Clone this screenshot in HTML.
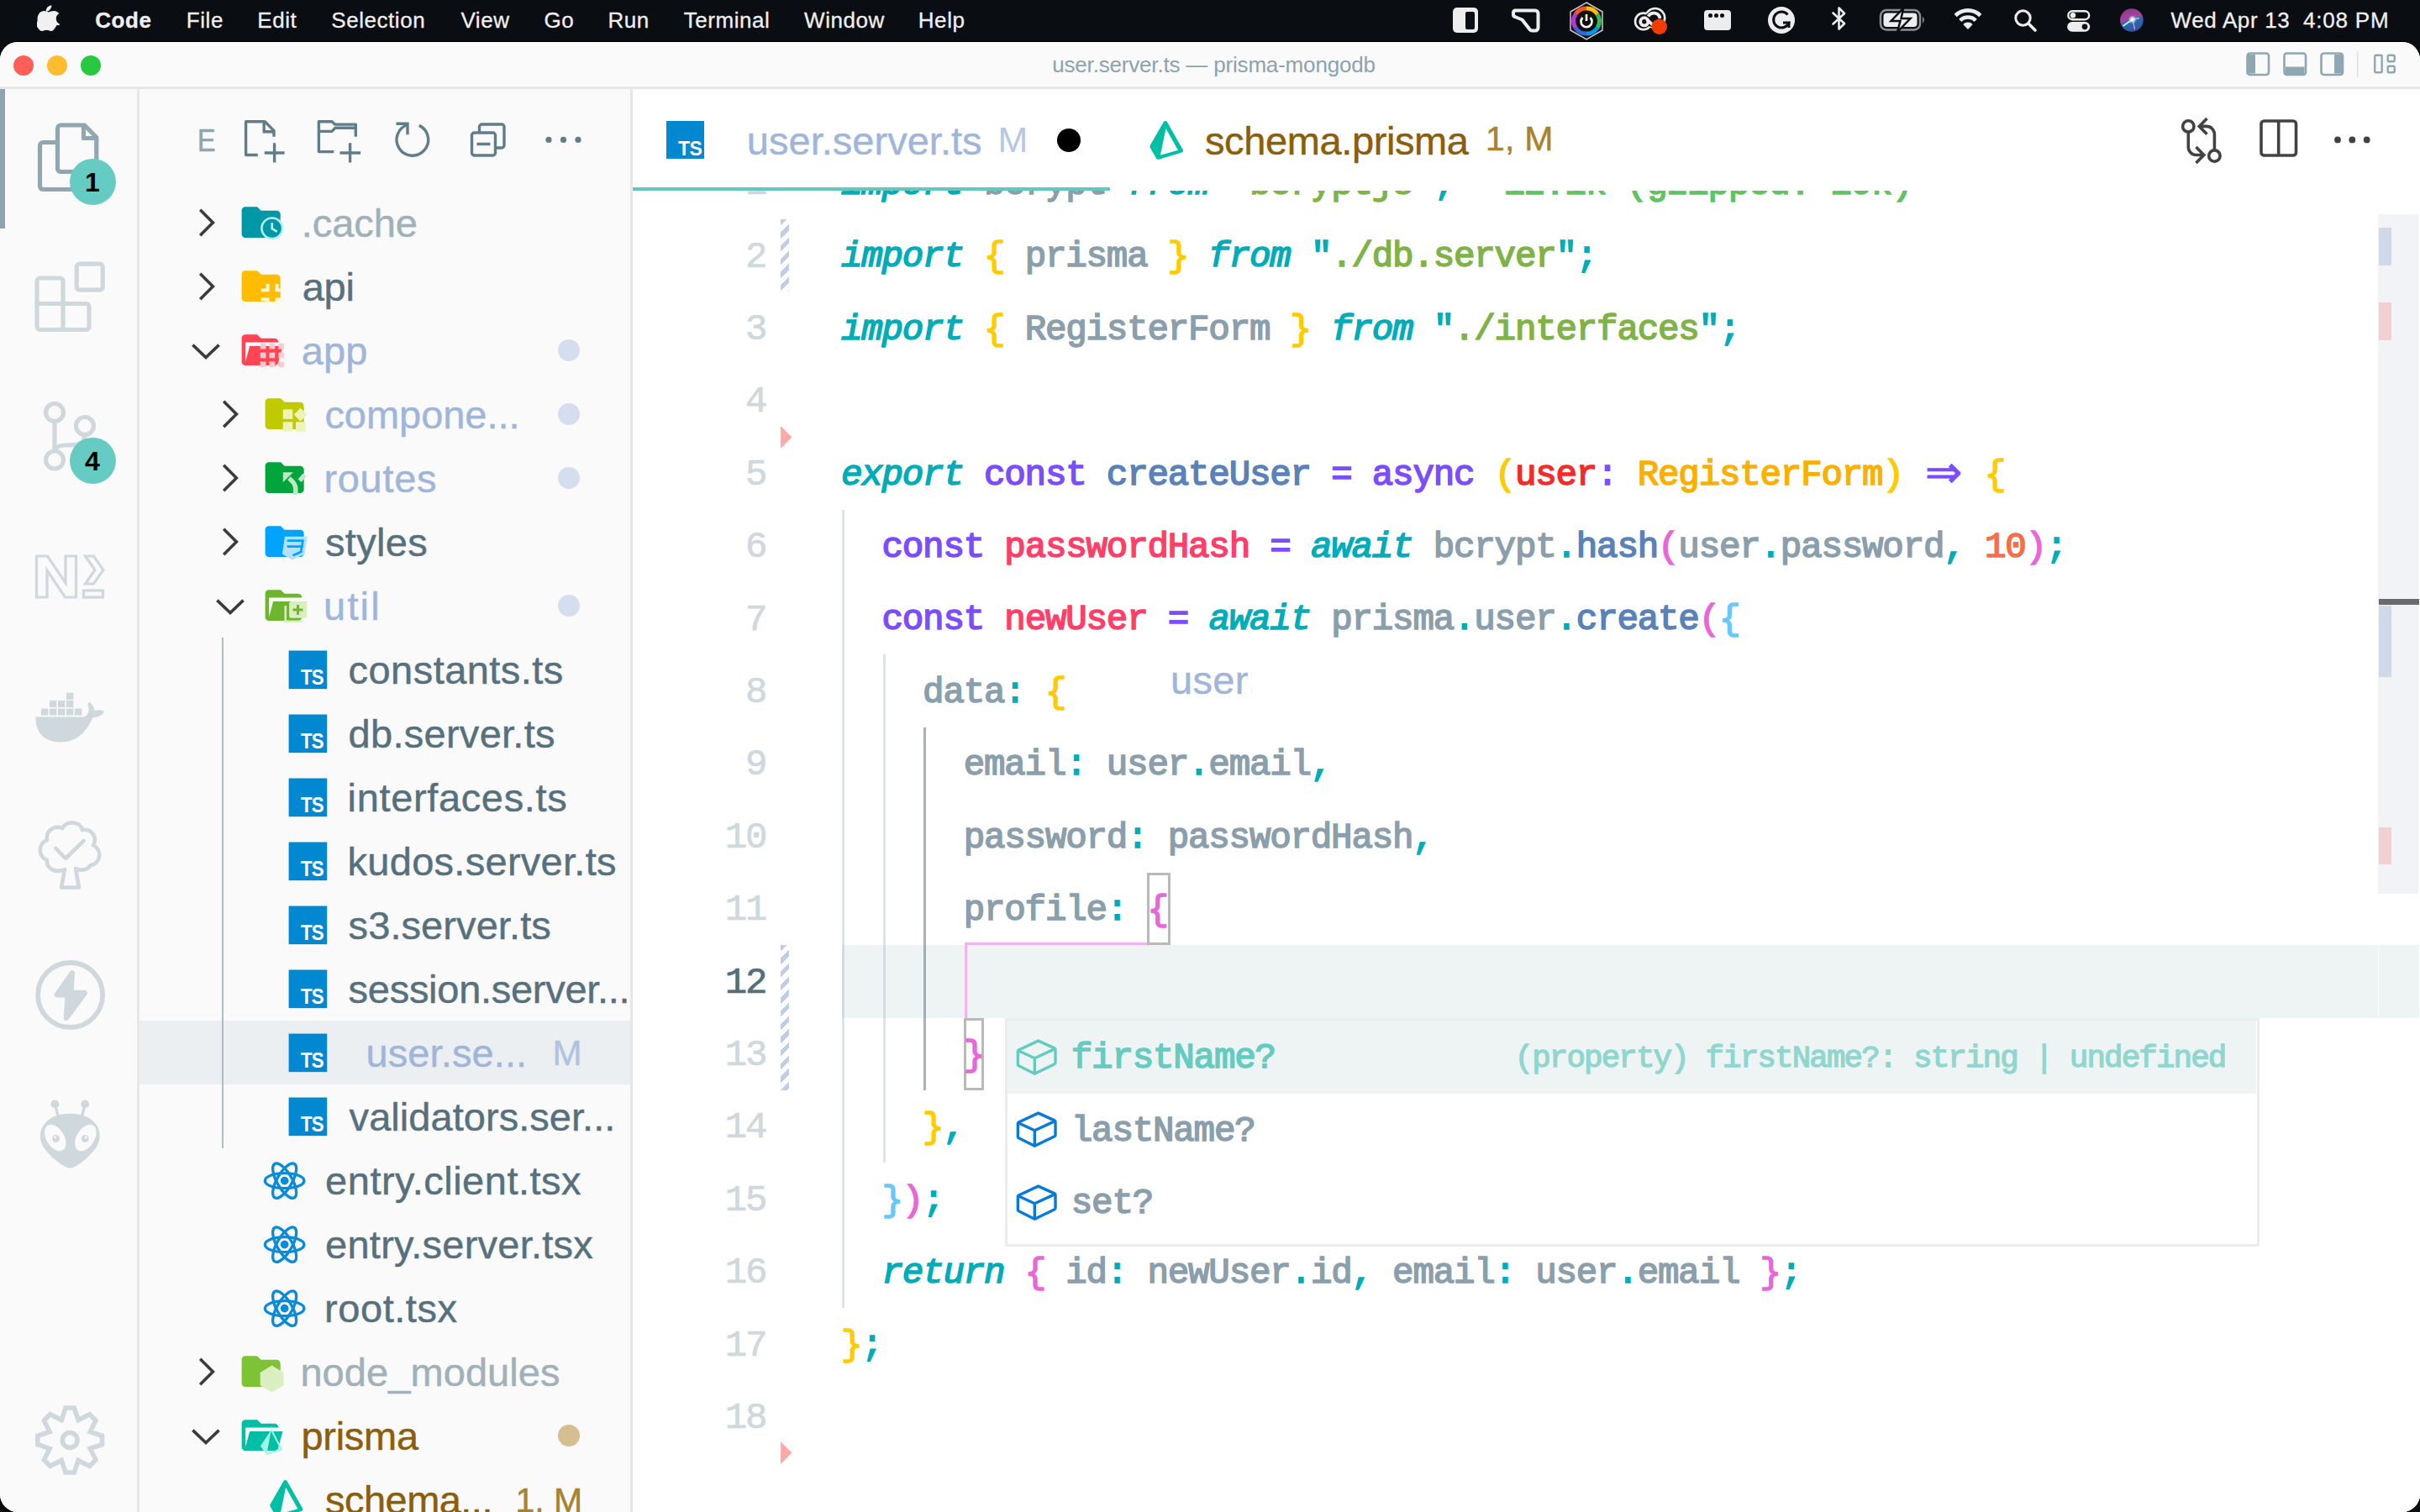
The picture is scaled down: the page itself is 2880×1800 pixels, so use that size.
<!DOCTYPE html>
<html lang="en"><head><meta charset="utf-8"><title>user.server.ts — prisma-mongodb</title>
<style>
*{box-sizing:border-box;margin:0;padding:0}
html,body{width:2880px;height:1800px;overflow:hidden;background:#0a0d12}
body{font-family:"Liberation Sans",sans-serif;position:relative}
.abs{position:absolute}
#menubar{position:absolute;left:0;top:0;width:2880px;height:50px;background:#0a0d12;color:#efefef;font-size:26px;line-height:50px;letter-spacing:0.55px;-webkit-text-stroke:0.3px #efefef}
#menubar span.mi{position:absolute;top:-1.5px;white-space:nowrap}
#window{position:absolute;left:0;top:50px;width:2880px;height:1750px;border-radius:21px;background:#fff;overflow:hidden;box-shadow:0 0 0 1.2px #000}
#titlebar{position:absolute;left:0;top:0;width:2880px;height:56px;background:#fafafa;border-bottom:3px solid #e7e7e7}
#title{position:absolute;left:0;width:2880px;top:-1px;text-align:center;font-size:26px;line-height:56px;color:#8ba3ad;letter-spacing:-0.18px;padding-left:9px}
.tl{position:absolute;top:16px;width:24px;height:24px;border-radius:50%}
#activity{position:absolute;left:0;top:56px;width:166px;height:1694px;background:#fafafa;border-right:3px solid #e7e7e7}
#sidebar{position:absolute;left:166px;top:56px;width:587px;height:1694px;background:#fafafa;border-right:3px solid #e7e7e7;overflow:hidden}
#editor{position:absolute;left:753px;top:56px;width:2127px;height:1694px;background:#fff;overflow:hidden}
.row{position:absolute;left:0;width:584px;height:76px;line-height:76px;font-size:47px;white-space:nowrap}
.row .lbl{position:absolute;top:1.5px;-webkit-text-stroke:0.45px currentColor}
.row svg{position:absolute}
.dot{position:absolute;width:26px;height:26px;border-radius:50%;left:498.4px;top:25px}
.c-def{color:#56717d}.c-ign{color:#a0b1b9}.c-mod{color:#9fb6da}.c-warn{color:#8c5e0a}
.code{position:absolute;left:0;white-space:pre;font-family:"Liberation Mono",monospace;font-size:42.5px;letter-spacing:-1.204px;line-height:86.4px;height:86.4px;-webkit-text-stroke:1.6px currentColor;color:#8a9fab}
.ln{position:absolute;white-space:pre;font-family:"Liberation Mono",monospace;font-size:44px;letter-spacing:-2.104px;line-height:86.4px;height:86.4px;width:160px;text-align:right;color:#cfd8dc;-webkit-text-stroke:0.7px currentColor}
.k{color:#00acb7;font-style:italic}
.p{color:#00acb7}
.v{color:#7c4dff}
.f{color:#5a82b8}
.r{color:#ff3f69}
.pr{color:#f52a2a}
.t{color:#fbb000}
.s{color:#7fb347}
.n{color:#f76d47}
.b1{color:#ffcb00}.b2{color:#e866d8}.b3{color:#68c8fa}
.g{color:#5fc45f}

.row svg{position:absolute}
.arrow{position:absolute;left:1290.100px;top:12.900px;width:45px;height:53px;line-height:53px;font-family:"DejaVu Sans",sans-serif;letter-spacing:0;font-size:53px;font-style:normal;-webkit-text-stroke:0.900px currentColor}
</style></head>
<body>
<div id="menubar">
<svg class="abs" style="left:44px;top:6px" width="26.500" height="31.500" viewBox="0 0 170 200"><path fill="#f0f0f0" d="M150.4 153.3c-3 7-6.600 13.400-10.800 19.300-5.700 8.100-10.400 13.700-14 16.800-5.600 5.100-11.600 7.800-18 7.900-4.600 0-10.200-1.300-16.600-4-6.500-2.600-12.400-3.900-17.900-3.900-5.700 0-11.800 1.300-18.400 3.900-6.500 2.700-11.800 4-15.900 4.200-6.200.3-12.300-2.500-18.500-8.100-3.900-3.400-8.800-9.200-14.600-17.500-6.300-8.800-11.400-19-15.500-30.700C5.900 128.600 3.800 116.400 3.800 104.600c0-13.500 2.900-25.200 8.800-35 4.600-7.900 10.700-14.100 18.400-18.600 7.700-4.600 16-6.900 24.900-7 4.900 0 11.300 1.500 19.300 4.500 7.900 3 13 4.500 15.300 4.500 1.700 0 7.300-1.800 16.900-5.300 9.100-3.300 16.700-4.600 23-4.100 17 1.400 29.800 8.100 38.300 20.200-15.200 9.200-22.700 22.100-22.600 38.700.1 12.900 4.800 23.600 14 32.100 4.200 4 8.800 7 14 9.200-1.100 3.300-2.300 6.400-3.600 9.400zM111.500 4c0 10.100-3.700 19.600-11.100 28.300-8.900 10.400-19.600 16.400-31.300 15.400-.1-1.200-.2-2.500-.2-3.800 0-9.700 4.200-20.100 11.700-28.600 3.700-4.300 8.500-7.900 14.300-10.700C100.600 1.900 106 .4 111 .1c.3 1.300.5 2.600.5 3.900z"/></svg>
<span class="mi" style="left:113.3px;font-weight:bold;">Code</span><span class="mi" style="left:221.8px;">File</span><span class="mi" style="left:306.3px;">Edit</span><span class="mi" style="left:394.3px;">Selection</span><span class="mi" style="left:548.4px;">View</span><span class="mi" style="left:647.4px;">Go</span><span class="mi" style="left:723.5px;">Run</span><span class="mi" style="left:813.6999999999999px;">Terminal</span><span class="mi" style="left:957.0999999999999px;">Window</span><span class="mi" style="left:1092.8px;">Help</span>
<div class="abs" style="left:1729px;top:9px;width:30px;height:30px;border-radius:5px;background:#ededed"></div><div class="abs" style="left:1744px;top:13.5px;width:11px;height:21px;border-radius:2px;background:#0a0d12"></div>
<svg class="abs" style="left:1798px;top:8px" width="36" height="34" viewBox="0 0 36 34"><path d="M5 4.500 H29 a3.500 3.500 0 0 1 3.500 3.500 V25 a3.500 3.500 0 0 1 -3.500 3.500 H25.500 a4 4 0 0 1 -3 -1.400 L13.500 15.500 L5 12 a3 3 0 0 1 -2 -3 V7.500 a3 3 0 0 1 2 -3z" fill="none" stroke="#ededed" stroke-width="4" stroke-linejoin="round"/></svg>
<svg class="abs" style="left:1864px;top:0px" width="48" height="50" viewBox="-24 -25 48 50"><polygon points="0,-22 19,-11 19,11 0,22 -19,11 -19,-11" fill="#111" stroke="#c8c8c8" stroke-width="1.500"/>
<g stroke-width="5" fill="none"><path d="M-13,-8 A15,15 0 0 1 0,-15" stroke="#e53"/><path d="M0,-15 A15,15 0 0 1 13,-8" stroke="#fb0"/><path d="M13,-8 A15,15 0 0 1 13,8" stroke="#3b5"/><path d="M13,8 A15,15 0 0 1 0,15" stroke="#09e"/><path d="M0,15 A15,15 0 0 1 -13,8" stroke="#36d"/><path d="M-13,8 A15,15 0 0 1 -13,-8" stroke="#b3d"/></g>
<circle r="8.500" fill="#111"/><path d="M-4.500,-4 A6.500,6.500 0 1 0 4.500,-4" fill="none" stroke="#fff" stroke-width="2.600"/><path d="M0,-8 V0" stroke="#fff" stroke-width="2.600"/></svg>
<svg class="abs" style="left:1940px;top:2px" width="50" height="46" viewBox="0 0 50 46"><g fill="#0a0d12" stroke="#ededed" stroke-width="2.600"><circle cx="29.700" cy="19.500" r="11.500"/><circle cx="15.800" cy="23.400" r="9.800"/></g><circle cx="26" cy="21" r="9" fill="#0a0d12"/><g fill="none" stroke="#ededed" stroke-width="3.800"><circle cx="16.800" cy="23.800" r="4.600"/><path d="M21.500 17.500 A7.500 7.500 0 0 1 35.500 20"/><path d="M19.800 20.800 L32 32.500"/></g><circle cx="34.700" cy="29.700" r="9.300" fill="#f03c00"/></svg>
<div class="abs" style="left:2028px;top:12px;width:32px;height:24px;border-radius:4px;background:#ededed"></div><div class="abs" style="left:2033px;top:15.500px;width:5px;height:5px;border-radius:50%;background:#0a0d12"></div><div class="abs" style="left:2040px;top:15.500px;width:5px;height:5px;border-radius:50%;background:#0a0d12"></div><div class="abs" style="left:2047px;top:15.500px;width:5px;height:5px;border-radius:50%;background:#0a0d12"></div>
<svg class="abs" style="left:2103px;top:7px" width="34" height="34" viewBox="-17 -17 34 34"><circle r="16" fill="#ededed"/><path d="M7.500,-6.500 A9.500,9.500 0 1 0 9,3 H2" fill="none" stroke="#0a0d12" stroke-width="3"/><path d="M9,3 V9" stroke="#0a0d12" stroke-width="3"/></svg>
<svg class="abs" style="left:2178px;top:7px" width="22" height="30" viewBox="0 0 22 30"><path d="M3.500 8.500 L17 21 L10.500 27.500 V2.500 L17 9 L3.500 21.500" fill="none" stroke="#ededed" stroke-width="2.600" stroke-linejoin="round" stroke-linecap="round"/></svg>
<svg class="abs" style="left:2236px;top:9px" width="58" height="30" viewBox="0 0 58 30"><rect x="2" y="3" width="47" height="23.500" rx="7" fill="none" stroke="#8d8f92" stroke-width="2.500"/><rect x="5.500" y="6.500" width="40" height="16.500" rx="4" fill="#ededed"/><path d="M52 10.500 q3.500 4 0 8.500z" fill="#8d8f92"/><path d="M29 1 L14.500 16 H25.500 L22 29 L37.500 13 H26.500z" fill="#ededed" stroke="#0a0d12" stroke-width="2.500"/></svg>
<svg class="abs" style="left:2324px;top:8px" width="36" height="28" viewBox="0 0 36 28"><g fill="none" stroke="#ededed" stroke-linecap="butt"><path d="M3.200 10.500 A21 21 0 0 1 32.800 10.500" stroke-width="4.600"/><path d="M8.800 16.300 A13 13 0 0 1 27.200 16.300" stroke-width="4.600"/></g><path d="M18 27 L12.300 21 A8 8 0 0 1 23.700 21z" fill="#ededed"/></svg>
<svg class="abs" style="left:2396px;top:10px" width="30" height="30" viewBox="0 0 30 30"><circle cx="11.500" cy="11.500" r="8.700" fill="none" stroke="#ededed" stroke-width="3"/><path d="M18 18 L26 26" stroke="#ededed" stroke-width="3.600" stroke-linecap="round"/></svg>
<svg class="abs" style="left:2459px;top:11.200px" width="30" height="28.100" viewBox="0 0 32 30"><rect x="2.500" y="2.500" width="26.500" height="10.500" rx="5.250" fill="none" stroke="#ededed" stroke-width="2.600"/><circle cx="8.500" cy="7.750" r="3.400" fill="#ededed"/><rect x="1.200" y="16" width="29" height="12.500" rx="6.250" fill="#ededed"/><circle cx="23.500" cy="22.250" r="3.600" fill="#0a0d12"/></svg>
<svg class="abs" style="left:2521px;top:9px" width="30" height="30" viewBox="-15 -15 30 30"><defs><linearGradient id="sg" x1="0.300" y1="0" x2="0.600" y2="1"><stop offset="0" stop-color="#8f3592"/><stop offset="0.420" stop-color="#a5449a"/><stop offset="0.550" stop-color="#3468ae"/><stop offset="1" stop-color="#2558a0"/></linearGradient><radialGradient id="sw" cx="0.500" cy="0.500" r="0.500"><stop offset="0" stop-color="#fff"/><stop offset="0.350" stop-color="#e8fbff" stop-opacity="0.900"/><stop offset="1" stop-color="#7fe8f0" stop-opacity="0"/></radialGradient></defs><circle cx="0.900" cy="0" r="13.800" fill="url(#sg)"/><path d="M-9.500,7 L2,-1" stroke="#bff6fb" stroke-width="1.600"/><path d="M2,-1 L10,-2.500" stroke="#59e0d8" stroke-width="1.600"/><path d="M2,-1 L4.500,11" stroke="#f08fd0" stroke-width="1.300"/><circle cx="1.800" cy="-0.800" r="5.200" fill="url(#sw)"/></svg>
<span class="mi" style="left:2583.500px;letter-spacing:0.650px">Wed Apr 13</span><span class="mi" style="left:2741px;letter-spacing:0.800px">4:08 PM</span>
</div>
<div id="window">
<div id="titlebar">
<div class="tl" style="left:16px;background:#ff5f57"></div><div class="tl" style="left:56px;background:#febc2e"></div><div class="tl" style="left:96px;background:#28c840"></div>
<div id="title">user.server.ts — prisma-mongodb</div>
<svg class="abs" style="left:2671px;top:10px" width="186" height="34" viewBox="2671 60 186 34"><rect x="2674.500" y="63.500" width="25.500" height="25.500" rx="3" fill="none" stroke="#8fa7b3" stroke-width="2.600"/><path d="M2674.500 65 h9.500 v22.500 h-9.500z" fill="#8fa7b3"/><rect x="2718.500" y="63.500" width="25.500" height="25.500" rx="3" fill="none" stroke="#8fa7b3" stroke-width="2.600"/><path d="M2720 79.500 h22.500 v8.500 h-22.500z" fill="#8fa7b3"/><rect x="2762.500" y="63.500" width="25.500" height="25.500" rx="3" fill="none" stroke="#8fa7b3" stroke-width="2.600"/><path d="M2778 65 h9.500 v22.500 h-9.500z" fill="#8fa7b3"/><path d="M2805.700 61 V92" stroke="#e2e2e2" stroke-width="1.600"/><rect x="2826.200" y="65.800" width="8.500" height="20.500" rx="1.500" fill="none" stroke="#8fa7b3" stroke-width="2.400"/><rect x="2841.700" y="65.800" width="8" height="7.500" rx="1.500" fill="none" stroke="#8fa7b3" stroke-width="2.400"/><rect x="2841.700" y="78.800" width="8" height="7.500" rx="1.500" fill="none" stroke="#8fa7b3" stroke-width="2.400"/></svg>
</div>
<div id="activity">
<div class="abs" style="left:0;top:0;width:5.500px;height:166px;background:#8da4ae"></div>
<svg class="abs" style="left:0;top:0" width="163" height="1694" viewBox="0 106 163 1694">
<g fill="none" stroke="#90a6b0" stroke-width="5.200" stroke-linejoin="round"><path d="M66 169.500 H51.500 a4 4 0 0 0 -4 4 V221.500 a4 4 0 0 0 4 4 H86"/><path d="M72.500 149 H100.500 L114.800 163.500 V200.500 a4 4 0 0 1 -4 4 H72.500 a4 4 0 0 1 -4 -4 V153 a4 4 0 0 1 4 -4z"/><path d="M99.500 149.500 V164.500 H114.500"/></g>
<g fill="none" stroke="#cfd8dc" stroke-width="5.200" stroke-linejoin="round"><path d="M47.500 331 H71.500 a3.500 3.500 0 0 1 3.500 3.500 V361.500 H102.500 a3.500 3.500 0 0 1 3.500 3.500 V389 a3.500 3.500 0 0 1 -3.500 3.500 H47.500 a3.500 3.500 0 0 1 -3.500 -3.500 V334.500 a3.500 3.500 0 0 1 3.500 -3.500z"/><path d="M44 361.500 H75 V392.500"/><rect x="91.200" y="314.200" width="31" height="31" rx="3.500"/></g>
<g fill="none" stroke="#cfd8dc" stroke-width="5.200"><circle cx="65" cy="491" r="10.500"/><circle cx="101" cy="507" r="10.500"/><circle cx="65" cy="547.500" r="10.500"/><path d="M65 501.500 V537"/><path d="M101 517.500 C101 530 90 530 78 530 C70 530 65 533 65 538"/></g>
<g fill="none" stroke="#cfd8dc" stroke-width="3.200" stroke-linejoin="miter"><path d="M43.500 711 V662 H56.500 L78 694 V662 H90.500 V711 H77.500 L56 679 V711z"/><path d="M101.500 662 H111.500 L123 678.500 L111.500 695 H101.500 L113 678.500z"/><rect x="99.500" y="703" width="23" height="8"/></g>
<g fill="#cfd8dc"><path d="M42.500 853.500 H100 C104 852 106 848 105.500 843 C104.500 840 104 838 106 836 C110 838 112 842 112.500 846 C117 844.500 121 845 124 847 C122 851.500 117 854 110.500 854 C104 870 92 883.500 72 883.500 C52 883.500 42 871 42.500 853.500z"/><rect x="49" y="843.5" width="8.400" height="8" /><rect x="59" y="843.5" width="8.400" height="8" /><rect x="69" y="843.5" width="8.400" height="8" /><rect x="79" y="843.5" width="8.400" height="8" /><rect x="89" y="843.5" width="8.400" height="8" /><rect x="59" y="834" width="8.400" height="8" /><rect x="69" y="834" width="8.400" height="8" /><rect x="79" y="834" width="8.400" height="8" /><rect x="79" y="824.8" width="8.400" height="8" /></g>
<g fill="none" stroke="#cfd8dc" stroke-width="4.600" stroke-linejoin="round" stroke-linecap="round"><path d="M77 1035 C66 1040 55 1034 56 1024 C45 1020 45 1004 56 1000 C54 988 66 982 74 986 C80 976 96 978 98 988 C110 986 116 998 111 1006 C122 1012 120 1028 108 1030 C104 1036 96 1037 90 1034 L94 1056.500 H73 L77 1035z"/><path d="M66.500 1010 L78 1022 L99.500 1001"/></g>
<circle cx="83.600" cy="1184.500" r="38.500" fill="none" stroke="#cfd8dc" stroke-width="5.800"/><path d="M85.800 1158.500 L67.800 1184.300 H80.600 L78.900 1211.800 L100.800 1182 H84.300z" fill="#cfd8dc" stroke="#cfd8dc" stroke-width="6.400" stroke-linejoin="round"/>
<g fill="#cfd8dc"><path d="M83.400 1390.600 C78 1391 60 1378 52 1366 C46.500 1357 47 1347 51.500 1340 C58 1330 70 1325.800 83.400 1325.800 C97 1325.800 109 1330 115.300 1340 C119.800 1347 120 1357 114.500 1366 C106.500 1378 89 1391 83.400 1390.600z"/><circle cx="65.400" cy="1314.400" r="4.900"/><circle cx="101.200" cy="1314.400" r="4.900"/></g><path d="M65.400 1314.400 L69 1328.500 M101.200 1314.400 L97.600 1328.500" stroke="#cfd8dc" stroke-width="3.200"/><ellipse cx="65.800" cy="1354.500" rx="10.600" ry="17.300" fill="#fafafa" transform="rotate(-31 65.800 1354.500)"/><ellipse cx="101.900" cy="1354.500" rx="10.600" ry="17.300" fill="#fafafa" transform="rotate(31 101.900 1354.500)"/><circle cx="66.500" cy="1355.600" r="4.500" fill="#cfd8dc"/><circle cx="101.200" cy="1355.600" r="4.500" fill="#cfd8dc"/><circle cx="65.500" cy="1354" r="1.400" fill="#fafafa"/><circle cx="102.300" cy="1354" r="1.400" fill="#fafafa"/>
<path d="M78.0 1676.1 L88.4 1676.1 L93.1 1690.5 L106.7 1683.7 L114.0 1691.0 L107.2 1704.6 L121.6 1709.3 L121.6 1719.7 L107.2 1724.4 L114.0 1738.0 L106.7 1745.3 L93.1 1738.5 L88.4 1752.9 L78.0 1752.9 L73.3 1738.5 L59.7 1745.3 L52.4 1738.0 L59.2 1724.4 L44.8 1719.7 L44.8 1709.3 L59.2 1704.6 L52.4 1691.0 L59.7 1683.7 L73.3 1690.5z" fill="none" stroke="#cfd8dc" stroke-width="5.500" stroke-linejoin="miter" stroke-miterlimit="6"/><circle cx="83.2" cy="1714.5" r="8.900" fill="none" stroke="#cfd8dc" stroke-width="5.500"/>
</svg>
<div class="abs" style="left:82.5px;top:82.9px;width:55px;height:55px;border-radius:50%;background:#66ccc3;color:#000;font-weight:bold;font-size:32px;line-height:56px;text-align:center">1</div><div class="abs" style="left:82.5px;top:414.5px;width:55px;height:55px;border-radius:50%;background:#66ccc3;color:#000;font-weight:bold;font-size:32px;line-height:56px;text-align:center">4</div>
</div>
<div id="sidebar">
<div class="abs" style="left:68.500px;top:41px;font-size:37.500px;line-height:40px;color:#8fa3ad;transform:scaleX(0.86);transform-origin:0 0;-webkit-text-stroke:0.600px #8fa3ad">E</div>
<svg class="abs" style="left:0;top:0" width="584" height="121" viewBox="166 106 584 121"><g fill="none" stroke="#5f7d8b" stroke-width="3.400" stroke-linejoin="miter"><path d="M306.800 184.500 H292.600 V144.700 H315.200 L326 155.600 V162.700" stroke-linejoin="round"/><path d="M314.200 144.700 V156.800 H326"/><path d="M326.600 170.200 V193.600 M314.800 182 H338.600"/><path d="M397.300 180.600 H379.400 V144.700 H395 L398.500 148.100 H423.300 V162.700" stroke-linejoin="round"/><path d="M379.400 156.400 H395 L399 152.300 H423.300"/><path d="M416.600 170.200 V193.600 M404.500 182 H429.100"/><path d="M498.800 149.400 A18.800 18.800 0 1 1 485.200 148.500"/><path d="M471.500 147.300 H485 V160.200" /><rect x="561.500" y="158" width="28" height="27" rx="3"/><path d="M570.500 158 V151 a3 3 0 0 1 3 -3 H597 a3 3 0 0 1 3 3 V173 a3 3 0 0 1 -3 3 H590"/><path d="M567.500 171.500 H583.500"/></g><g fill="#5f7d8b"><circle cx="653" cy="166.400" r="3.600"/><circle cx="670.500" cy="166.400" r="3.600"/><circle cx="688" cy="166.400" r="3.600"/></g></svg>
<div class="row" style="top:120.5px;"><svg style="left:65.7px;top:18.0px" width="28" height="40" viewBox="-14 -20 28 40"><path d="M-7.800 -15.200 L7.400 0 L-7.800 15.200" fill="none" stroke="#3b3b3b" stroke-width="3.600"/></svg><svg style="left:116.6px;top:10.3px" width="55.3" height="55.3" viewBox="0 0 24 24" overflow="visible"><path d="M10 4H4c-1.110 0-2 .890-2 2v12c0 1.097.903 2 2 2h16c1.097 0 2-.903 2-2V8c0-1.110-.9-2-2-2h-8l-2-2z" fill="#0097a7"/><circle cx="17.700" cy="15.100" r="5.350" fill="#0097a7" stroke="#b2f0f5" stroke-width="1.150"/><path d="M17.700 12.300 V15.300 L20.300 16.900" fill="none" stroke="#b2f0f5" stroke-width="1.150"/></svg><span class="lbl c-ign" style="left:192.8px;letter-spacing:-0.08px">.cache</span></div>
<div class="row" style="top:196.5px;"><svg style="left:65.7px;top:18.0px" width="28" height="40" viewBox="-14 -20 28 40"><path d="M-7.800 -15.200 L7.400 0 L-7.800 15.200" fill="none" stroke="#3b3b3b" stroke-width="3.600"/></svg><svg style="left:116.6px;top:10.3px" width="55.3" height="55.3" viewBox="0 0 24 24" overflow="visible"><path d="M10 4H4c-1.110 0-2 .890-2 2v12c0 1.097.903 2 2 2h16c1.097 0 2-.903 2-2V8c0-1.110-.9-2-2-2h-8l-2-2z" fill="#ffbc00"/><g fill="#fff8dc"><path d="M12.070 13.200 H14.600 V10.900 H16.300 V14.900 H12.070z"/><path d="M23.570 13.200 H21.050 V10.900 H19.350 V14.900 H23.570z"/><path d="M12.070 19.600 H14.600 V22 H16.300 V18.050 H12.070z"/><path d="M23.570 19.600 H21.050 V22 H19.350 V18.050 H23.570z"/></g></svg><span class="lbl c-def" style="left:193.7px;letter-spacing:-0.25px">api</span></div>
<div class="row" style="top:272.5px;"><svg style="left:59.2px;top:25.5px" width="40" height="28" viewBox="-20 -14 40 28"><path d="M-15.600 -7.400 L0 7.600 L15.600 -7.400" fill="none" stroke="#3b3b3b" stroke-width="3.600"/></svg><svg style="left:116.6px;top:10.3px" width="55.3" height="55.3" viewBox="0 0 24 24" overflow="visible"><path d="M19 20H4c-1.110 0-2-.9-2-2V6c0-1.110.890-2 2-2h6l2 2h7a2 2 0 0 1 2 2H4v10l2.140-8h17.070l-2.280 8.500c-.230.870-1.010 1.500-1.930 1.500z" fill="#ff4453"/><rect x="11.6" y="8.6" width="2.900" height="2.900" fill="#ffc9d0"/><rect x="11.6" y="13.3" width="2.900" height="2.900" fill="#ffc9d0"/><rect x="11.6" y="18.0" width="2.900" height="2.900" fill="#ffc9d0"/><rect x="16.3" y="8.6" width="2.900" height="2.900" fill="#ffc9d0"/><rect x="16.3" y="13.3" width="2.900" height="2.900" fill="#ffc9d0"/><rect x="16.3" y="18.0" width="2.900" height="2.900" fill="#ffc9d0"/><rect x="21.0" y="8.6" width="2.900" height="2.900" fill="#ffc9d0"/><rect x="21.0" y="13.3" width="2.900" height="2.900" fill="#ffc9d0"/><rect x="21.0" y="18.0" width="2.900" height="2.900" fill="#ffc9d0"/></svg><span class="lbl c-mod" style="left:192.7px;letter-spacing:0.15px">app</span><div class="dot" style="background:#d5deee"></div></div>
<div class="row" style="top:348.5px;"><svg style="left:94.0px;top:18.0px" width="28" height="40" viewBox="-14 -20 28 40"><path d="M-7.800 -15.200 L7.400 0 L-7.800 15.200" fill="none" stroke="#3b3b3b" stroke-width="3.600"/></svg><svg style="left:144.9px;top:10.3px" width="55.3" height="55.3" viewBox="0 0 24 24" overflow="visible"><path d="M10 4H4c-1.110 0-2 .890-2 2v12c0 1.097.903 2 2 2h16c1.097 0 2-.903 2-2V8c0-1.110-.9-2-2-2h-8l-2-2z" fill="#c0ca00"/><g fill="#eef3b8"><rect x="11.200" y="9.700" width="5" height="5"/><rect x="11.200" y="16.200" width="5" height="5"/><rect x="17.800" y="16.200" width="5" height="5"/><path d="M20.200 9 L23.600 12.400 L20.200 15.800 L16.800 12.400z"/></g></svg><span class="lbl c-mod" style="left:220.4px;letter-spacing:-0.045px">compone...</span><div class="dot" style="background:#d5deee"></div></div>
<div class="row" style="top:424.5px;"><svg style="left:94.0px;top:18.0px" width="28" height="40" viewBox="-14 -20 28 40"><path d="M-7.800 -15.200 L7.400 0 L-7.800 15.200" fill="none" stroke="#3b3b3b" stroke-width="3.600"/></svg><svg style="left:144.9px;top:10.3px" width="55.3" height="55.3" viewBox="0 0 24 24" overflow="visible"><path d="M10 4H4c-1.110 0-2 .890-2 2v12c0 1.097.903 2 2 2h16c1.097 0 2-.903 2-2V8c0-1.110-.9-2-2-2h-8l-2-2z" fill="#00a53c"/><path d="M17.700 20.800 V17.600 C17.700 15.300 16.200 13.800 14.300 12.300" fill="none" stroke="#bfe8c6" stroke-width="2.400"/><path d="M11.200 9.250 H16.400 L11.200 14.450z" fill="#bfe8c6"/><path d="M19.800 13.550 L22.400 10.550" fill="none" stroke="#bfe8c6" stroke-width="2.300"/></svg><span class="lbl c-mod" style="left:219.4px;letter-spacing:0.72px">routes</span><div class="dot" style="background:#d5deee"></div></div>
<div class="row" style="top:500.5px;"><svg style="left:94.0px;top:18.0px" width="28" height="40" viewBox="-14 -20 28 40"><path d="M-7.800 -15.200 L7.400 0 L-7.800 15.200" fill="none" stroke="#3b3b3b" stroke-width="3.600"/></svg><svg style="left:144.9px;top:10.3px" width="55.3" height="55.3" viewBox="0 0 24 24" overflow="visible"><path d="M10 4H4c-1.110 0-2 .890-2 2v12c0 1.097.903 2 2 2h16c1.097 0 2-.903 2-2V8c0-1.110-.9-2-2-2h-8l-2-2z" fill="#00a3ff"/><path d="M12.150 9.400 H23.700 L22.400 18.450 L15.900 21.500 L10.800 18.450z" fill="#b5e0ff"/><path d="M13.300 11.600 H21.400 L21 14.600 H13.300 M20.900 14.600 L20.500 17.400 L16.300 19.200" stroke="#00a3ff" stroke-width="1.200" fill="none"/></svg><span class="lbl c-def" style="left:221.1px;letter-spacing:0.28px">styles</span></div>
<div class="row" style="top:576.5px;"><svg style="left:87.5px;top:25.5px" width="40" height="28" viewBox="-20 -14 40 28"><path d="M-15.600 -7.400 L0 7.600 L15.600 -7.400" fill="none" stroke="#3b3b3b" stroke-width="3.600"/></svg><svg style="left:144.9px;top:10.3px" width="55.3" height="55.3" viewBox="0 0 24 24" overflow="visible"><path d="M19 20H4c-1.110 0-2-.9-2-2V6c0-1.110.890-2 2-2h6l2 2h7a2 2 0 0 1 2 2H4v10l2.140-8h17.070l-2.280 8.500c-.230.870-1.010 1.500-1.930 1.500z" fill="#6cb52d"/><path d="M12.500 12.150 V20.300 H21.100" fill="none" stroke="#d9efc0" stroke-width="1.100"/><rect x="14.400" y="10" width="9.100" height="8.600" rx="1.100" fill="#d9efc0"/><path d="M18.900 11.700 v5.200 M16.300 14.300 h5.200" stroke="#6cb52d" stroke-width="1.300"/></svg><span class="lbl c-mod" style="left:219.1px;letter-spacing:2.166px">util</span><div class="dot" style="background:#d5deee"></div></div>
<div class="row" style="top:652.5px;"><svg style="left:173.2px;top:10.8px" width="55.3" height="55.3" viewBox="0 0 24 24"><rect x="2" y="2.400" width="19.800" height="19.800" fill="#0288d1"/><text x="20" y="20.100" text-anchor="end" font-family="Liberation Sans, sans-serif" font-weight="bold" font-size="10.900" fill="#fff" letter-spacing="-0.3" textLength="11.800" lengthAdjust="spacingAndGlyphs">TS</text></svg><span class="lbl c-def" style="left:248.6px;letter-spacing:0.445px">constants.ts</span></div>
<div class="row" style="top:728.5px;"><svg style="left:173.2px;top:10.8px" width="55.3" height="55.3" viewBox="0 0 24 24"><rect x="2" y="2.400" width="19.800" height="19.800" fill="#0288d1"/><text x="20" y="20.100" text-anchor="end" font-family="Liberation Sans, sans-serif" font-weight="bold" font-size="10.900" fill="#fff" letter-spacing="-0.3" textLength="11.800" lengthAdjust="spacingAndGlyphs">TS</text></svg><span class="lbl c-def" style="left:248.6px;letter-spacing:0.273px">db.server.ts</span></div>
<div class="row" style="top:804.5px;"><svg style="left:173.2px;top:10.8px" width="55.3" height="55.3" viewBox="0 0 24 24"><rect x="2" y="2.400" width="19.800" height="19.800" fill="#0288d1"/><text x="20" y="20.100" text-anchor="end" font-family="Liberation Sans, sans-serif" font-weight="bold" font-size="10.900" fill="#fff" letter-spacing="-0.3" textLength="11.800" lengthAdjust="spacingAndGlyphs">TS</text></svg><span class="lbl c-def" style="left:247.6px;letter-spacing:0.642px">interfaces.ts</span></div>
<div class="row" style="top:880.5px;"><svg style="left:173.2px;top:10.8px" width="55.3" height="55.3" viewBox="0 0 24 24"><rect x="2" y="2.400" width="19.800" height="19.800" fill="#0288d1"/><text x="20" y="20.100" text-anchor="end" font-family="Liberation Sans, sans-serif" font-weight="bold" font-size="10.900" fill="#fff" letter-spacing="-0.3" textLength="11.800" lengthAdjust="spacingAndGlyphs">TS</text></svg><span class="lbl c-def" style="left:247.6px;letter-spacing:0.271px">kudos.server.ts</span></div>
<div class="row" style="top:956.5px;"><svg style="left:173.2px;top:10.8px" width="55.3" height="55.3" viewBox="0 0 24 24"><rect x="2" y="2.400" width="19.800" height="19.800" fill="#0288d1"/><text x="20" y="20.100" text-anchor="end" font-family="Liberation Sans, sans-serif" font-weight="bold" font-size="10.900" fill="#fff" letter-spacing="-0.3" textLength="11.800" lengthAdjust="spacingAndGlyphs">TS</text></svg><span class="lbl c-def" style="left:248.6px;letter-spacing:0.081px">s3.server.ts</span></div>
<div class="row" style="top:1032.5px;"><svg style="left:173.2px;top:10.8px" width="55.3" height="55.3" viewBox="0 0 24 24"><rect x="2" y="2.400" width="19.800" height="19.800" fill="#0288d1"/><text x="20" y="20.100" text-anchor="end" font-family="Liberation Sans, sans-serif" font-weight="bold" font-size="10.900" fill="#fff" letter-spacing="-0.3" textLength="11.800" lengthAdjust="spacingAndGlyphs">TS</text></svg><span class="lbl c-def" style="left:248.6px;letter-spacing:-0.281px">session.server...</span></div>
<div class="row" style="top:1108.5px;background:#eceff1;"><svg style="left:173.2px;top:10.8px" width="55.3" height="55.3" viewBox="0 0 24 24"><rect x="2" y="2.400" width="19.800" height="19.800" fill="#0288d1"/><text x="20" y="20.100" text-anchor="end" font-family="Liberation Sans, sans-serif" font-weight="bold" font-size="10.900" fill="#fff" letter-spacing="-0.3" textLength="11.800" lengthAdjust="spacingAndGlyphs">TS</text></svg><span class="lbl c-mod" style="left:269.5px;letter-spacing:0.099px">user.se...</span><span class="lbl" style="left:491.500px;font-size:42px;color:#b0c3e2">M</span></div>
<div class="row" style="top:1184.5px;"><svg style="left:173.2px;top:10.8px" width="55.3" height="55.3" viewBox="0 0 24 24"><rect x="2" y="2.400" width="19.800" height="19.800" fill="#0288d1"/><text x="20" y="20.100" text-anchor="end" font-family="Liberation Sans, sans-serif" font-weight="bold" font-size="10.900" fill="#fff" letter-spacing="-0.3" textLength="11.800" lengthAdjust="spacingAndGlyphs">TS</text></svg><span class="lbl c-def" style="left:249.6px;letter-spacing:0.044px">validators.ser...</span></div>
<div class="row" style="top:1260.5px;"><svg style="left:144.9px;top:11.8px" width="55.3" height="55.3" viewBox="0 0 24 24"><ellipse cx="12" cy="12" rx="10.100" ry="3.900" fill="none" stroke="#0a8bd8" stroke-width="1.450"/><ellipse cx="12" cy="12" rx="10.100" ry="3.900" fill="none" stroke="#0a8bd8" stroke-width="1.450" transform="rotate(60 12 12)"/><ellipse cx="12" cy="12" rx="10.100" ry="3.900" fill="none" stroke="#0a8bd8" stroke-width="1.450" transform="rotate(120 12 12)"/><circle cx="12" cy="12" r="2.100" fill="#0a8bd8"/></svg><span class="lbl c-def" style="left:221.1px;letter-spacing:0.507px">entry.client.tsx</span></div>
<div class="row" style="top:1336.5px;"><svg style="left:144.9px;top:11.8px" width="55.3" height="55.3" viewBox="0 0 24 24"><ellipse cx="12" cy="12" rx="10.100" ry="3.900" fill="none" stroke="#0a8bd8" stroke-width="1.450"/><ellipse cx="12" cy="12" rx="10.100" ry="3.900" fill="none" stroke="#0a8bd8" stroke-width="1.450" transform="rotate(60 12 12)"/><ellipse cx="12" cy="12" rx="10.100" ry="3.900" fill="none" stroke="#0a8bd8" stroke-width="1.450" transform="rotate(120 12 12)"/><circle cx="12" cy="12" r="2.100" fill="#0a8bd8"/></svg><span class="lbl c-def" style="left:221.1px;letter-spacing:0.233px">entry.server.tsx</span></div>
<div class="row" style="top:1412.5px;"><svg style="left:144.9px;top:11.8px" width="55.3" height="55.3" viewBox="0 0 24 24"><ellipse cx="12" cy="12" rx="10.100" ry="3.900" fill="none" stroke="#0a8bd8" stroke-width="1.450"/><ellipse cx="12" cy="12" rx="10.100" ry="3.900" fill="none" stroke="#0a8bd8" stroke-width="1.450" transform="rotate(60 12 12)"/><ellipse cx="12" cy="12" rx="10.100" ry="3.900" fill="none" stroke="#0a8bd8" stroke-width="1.450" transform="rotate(120 12 12)"/><circle cx="12" cy="12" r="2.100" fill="#0a8bd8"/></svg><span class="lbl c-def" style="left:220.1px;letter-spacing:0.543px">root.tsx</span></div>
<div class="row" style="top:1488.5px;"><svg style="left:65.7px;top:18.0px" width="28" height="40" viewBox="-14 -20 28 40"><path d="M-7.800 -15.200 L7.400 0 L-7.800 15.200" fill="none" stroke="#3b3b3b" stroke-width="3.600"/></svg><svg style="left:116.6px;top:10.3px" width="55.3" height="55.3" viewBox="0 0 24 24" overflow="visible"><path d="M10 4H4c-1.110 0-2 .890-2 2v12c0 1.097.903 2 2 2h16c1.097 0 2-.903 2-2V8c0-1.110-.9-2-2-2h-8l-2-2z" fill="#7dc333"/><path d="M17.600 8.950 L23.650 12.550 V19.200 L17.600 22.800 L11.600 19.200 V12.550z" fill="#d9efc0"/></svg><span class="lbl c-ign" style="left:191.4px;letter-spacing:0.073px">node_modules</span></div>
<div class="row" style="top:1564.5px;"><svg style="left:59.2px;top:25.5px" width="40" height="28" viewBox="-20 -14 40 28"><path d="M-15.600 -7.400 L0 7.600 L15.600 -7.400" fill="none" stroke="#3b3b3b" stroke-width="3.600"/></svg><svg style="left:116.6px;top:10.3px" width="55.3" height="55.3" viewBox="0 0 24 24" overflow="visible"><path d="M19 20H4c-1.110 0-2-.9-2-2V6c0-1.110.890-2 2-2h6l2 2h7a2 2 0 0 1 2 2H4v10l2.140-8h17.070l-2.280 8.500c-.230.870-1.010 1.500-1.930 1.500z" fill="#00bfa5"/><path d="M17.300 9.100 L11.700 17.550 L14.700 21.800 L15.050 21.200z" fill="#9ff5e4"/><path d="M17.300 9.100 L22.550 19.350 L14.700 21.800" fill="none" stroke="#9ff5e4" stroke-width="0.900" stroke-linejoin="round"/></svg><span class="lbl c-warn" style="left:192.4px;letter-spacing:-0.26px">prisma</span><div class="dot" style="background:#d6bf8f"></div></div>
<div class="row" style="top:1640.5px;"><svg style="left:145.9px;top:10.5px" width="55.3" height="55.3" viewBox="0 0 24 24"><path d="M11.100 2.600 L4.200 14.600 a1.200 1.200 0 0 0 0 1.200 L7.300 21.200 a1.200 1.200 0 0 0 1.400 .5 L20.300 18.200 a1 1 0 0 0 .6 -1.400 L12.800 2.600 a1 1 0 0 0 -1.700 0z M12.200 6 L18.400 17 L9.400 19.600z" fill="#00bfa5" fill-rule="evenodd"/></svg><span class="lbl c-warn" style="left:221.1px;letter-spacing:-0.55px">schema...</span><span class="lbl" style="left:447.500px;font-size:41px;color:#a8832f;-webkit-text-stroke:0.500px #a8832f">1, M</span></div>
<div class="abs" style="left:97.69999999999999px;top:652.5px;width:2.600px;height:608px;background:#aebcc4"></div>
</div>
<div id="editor">
<div class="abs" style="left:0;top:0;width:2127px;height:121px;background:#fff">
<svg class="abs" style="left:40px;top:38px" width="45" height="45" viewBox="0 0 45 45"><rect width="45" height="45" fill="#0288d1"/><text x="42.500" y="40.500" text-anchor="end" font-family="Liberation Sans, sans-serif" font-weight="bold" font-size="23" fill="#fff" letter-spacing="-0.4">TS</text></svg>
<div class="abs" style="left:135.79999999999995px;top:0.700px;line-height:121px;font-size:47px;color:#9fb6da;white-space:nowrap;letter-spacing:0.020px;-webkit-text-stroke:0.450px #9fb6da">user.server.ts</div>
<div class="abs" style="left:434.5px;top:0px;line-height:121px;font-size:43px;color:#b6c7e2;white-space:nowrap">M</div>
<div class="abs" style="left:505.4000000000001px;top:46.5px;width:28px;height:28px;border-radius:50%;background:#000"></div>
<div class="abs" style="left:0;top:117.30000000000001px;width:568px;height:3.700px;background:#62c8be"></div>
<svg class="abs" style="left:605.5px;top:32.5px" width="56" height="56" viewBox="0 0 24 24"><path d="M11.100 2.600 L4.200 14.600 a1.200 1.200 0 0 0 0 1.200 L7.300 21.200 a1.200 1.200 0 0 0 1.400 .5 L20.300 18.200 a1 1 0 0 0 .6 -1.400 L12.800 2.600 a1 1 0 0 0 -1.700 0z M12.200 6 L18.400 17 L9.400 19.600z" fill="#00bfa5" fill-rule="evenodd"/></svg><div class="abs" style="left:681px;top:0.700px;line-height:121px;font-size:47px;color:#8c5e0a;white-space:nowrap;letter-spacing:-0.390px;-webkit-text-stroke:0.450px #8c5e0a">schema.prisma</div>
<div class="abs" style="left:1015px;top:-0.700px;line-height:121px;font-size:41px;color:#a8832f;white-space:nowrap;letter-spacing:0.200px;-webkit-text-stroke:0.500px #a8832f">1, M</div>
<svg class="abs" style="left:1837px;top:30px" width="240" height="64" viewBox="2590 136 240 64"><g fill="none" stroke="#424242" stroke-width="3.600"><circle cx="2604.300" cy="150.400" r="6.700"/><circle cx="2635.400" cy="185.600" r="6.700"/><path d="M2604.300 157.200 V175 a9.500 9.500 0 0 0 9.500 9.500 H2621.500"/><path d="M2613.500 175 L2622.800 184.500 L2613.500 194" stroke-linejoin="miter"/><path d="M2635.400 178.800 V159.900 a9.500 9.500 0 0 0 -9.500 -9.500 H2618.500"/><path d="M2626.500 141 L2617.300 150.400 L2626.500 159.800" stroke-linejoin="miter"/><rect x="2691" y="144" width="41.500" height="41" rx="3.500"/><path d="M2711.700 144 V185"/></g><g fill="#424242"><circle cx="2782" cy="166.400" r="3.900"/><circle cx="2799.300" cy="166.400" r="3.900"/><circle cx="2816.700" cy="166.400" r="3.900"/></g></svg>
</div>
<div class="abs" style="left:0;top:121px;width:2127px;height:1573px;overflow:hidden">
<div class="abs" style="left:249.1px;top:897.8px;width:1900px;height:86.900px;background:#eef3f4"></div>
<div class="abs" style="left:2077.0px;top:28.0px;width:48px;height:808.500px;background:rgba(200,208,220,0.250)"></div>
<div class="abs" style="left:2078.0px;top:44.0px;width:15px;height:45px;background:#d0d9ea"></div><div class="abs" style="left:2078.0px;top:133.0px;width:15px;height:44.5px;background:#f0d0d2"></div><div class="abs" style="left:2078.0px;top:494.0px;width:15px;height:85px;background:#d0d9ea"></div><div class="abs" style="left:2078.0px;top:757.5px;width:15px;height:44.5px;background:#f0d0d2"></div><div class="abs" style="left:2078.0px;top:486.0px;width:49px;height:7px;background:#6a6a6a"></div>
<div class="abs" style="left:2076.5px;top:897.8px;width:1.200px;height:86.900px;background:#fafcfc"></div><div class="abs" style="left:2125.5px;top:0;width:1.500px;height:1573px;background:#fff"></div>
<div class="abs" style="left:249.1px;top:379.6px;width:3.300px;height:950.4000000000001px;background:rgba(160,180,195,0.36)"></div><div class="abs" style="left:298.2px;top:552.4px;width:3.200px;height:604.8000000000001px;background:rgba(160,180,195,0.36)"></div><div class="abs" style="left:346.1px;top:638.8px;width:3.400px;height:432.0px;background:rgba(96,125,139,0.58)"></div>
<div class="abs" style="left:394.5px;top:894.7px;width:218.5px;height:3.300px;background:#f4b2ee"></div><div class="abs" style="left:394.5px;top:894.7px;width:3.200px;height:92px;background:#f4b2ee"></div>
<div class="abs" style="left:612.0px;top:811.5px;width:27.700px;height:86.500px;border:3px solid #b9b9b9"></div><div class="abs" style="left:394.0px;top:985.3px;width:24px;height:85.500px;border:3px solid #b9b9b9"></div>
<div class="abs" style="left:176.0px;top:34.0px;width:10px;height:86.4px;background:repeating-linear-gradient(135deg,#c0cde6 0 5.200px,#fff 5.200px 11.100px)"></div><div class="abs" style="left:176.0px;top:898.0px;width:10px;height:172.8px;background:repeating-linear-gradient(135deg,#c0cde6 0 5.200px,#fff 5.200px 11.100px)"></div>
<svg class="abs" style="left:176.0px;top:279.7px" width="14" height="27" viewBox="0 0 14 27"><path d="M0 0 L13.500 13.500 L0 27z" fill="#ffa9a9"/></svg><svg class="abs" style="left:176.0px;top:1489.3px" width="14" height="27" viewBox="0 0 14 27"><path d="M0 0 L13.500 13.500 L0 27z" fill="#ffa9a9"/></svg>
<div class="ln" style="left:-1.7px;top:-50.8px;">1</div><div class="code" style="left:247.9px;top:-50.1px"><span class="k">import</span> bcrypt <span class="k">from</span> <span class="p">"</span><span class="s">bcryptjs</span><span class="p">";</span><span class="g" style="margin-left:59.5px">12.1k (gzipped: 10k)</span></div>
<div class="ln" style="left:-1.7px;top:35.6px;">2</div><div class="code" style="left:247.9px;top:36.3px"><span class="k">import</span> <span class="b1">{</span> prisma <span class="b1">}</span> <span class="k">from</span> <span class="p">"</span><span class="s">./db.server</span><span class="p">";</span></div>
<div class="ln" style="left:-1.7px;top:122.0px;">3</div><div class="code" style="left:247.9px;top:122.7px"><span class="k">import</span> <span class="b1">{</span> RegisterForm <span class="b1">}</span> <span class="k">from</span> <span class="p">"</span><span class="s">./interfaces</span><span class="p">";</span></div>
<div class="ln" style="left:-1.7px;top:208.4px;">4</div>
<div class="ln" style="left:-1.7px;top:294.8px;">5</div><div class="code" style="left:247.9px;top:295.5px"><span class="k">export</span> <span class="v">const</span> <span class="f">createUser</span> <span class="v">=</span> <span class="v">async</span> <span class="b1">(</span><span class="pr">user</span><span class="v">:</span> <span class="t">RegisterForm</span><span class="b1">)</span> <span class="v arrow">⇒</span>   <span class="b1">{</span></div>
<div class="ln" style="left:-1.7px;top:381.2px;">6</div><div class="code" style="left:247.9px;top:381.9px">  <span class="v">const</span> <span class="r">passwordHash</span> <span class="v">=</span> <span class="k">await</span> bcrypt<span class="p">.</span><span class="f">hash</span><span class="b2">(</span>user<span class="p">.</span>password<span class="p">,</span> <span class="n">10</span><span class="b2">)</span><span class="p">;</span></div>
<div class="ln" style="left:-1.7px;top:467.6px;">7</div><div class="code" style="left:247.9px;top:468.3px">  <span class="v">const</span> <span class="r">newUser</span> <span class="v">=</span> <span class="k">await</span> prisma<span class="p">.</span>user<span class="p">.</span><span class="f">create</span><span class="b2">(</span><span class="b3">{</span></div>
<div class="ln" style="left:-1.7px;top:554.0px;">8</div><div class="code" style="left:247.9px;top:554.7px">    data<span class="p">:</span> <span class="b1">{</span></div>
<div class="ln" style="left:-1.7px;top:640.4px;">9</div><div class="code" style="left:247.9px;top:641.1px">      email<span class="p">:</span> user<span class="p">.</span>email<span class="p">,</span></div>
<div class="ln" style="left:-1.7px;top:726.8px;">10</div><div class="code" style="left:247.9px;top:727.5px">      password<span class="p">:</span> passwordHash<span class="p">,</span></div>
<div class="ln" style="left:-1.7px;top:813.2px;">11</div><div class="code" style="left:247.9px;top:813.9px">      profile<span class="p">:</span> <span class="b2">{</span></div>
<div class="ln" style="left:-1.7px;top:899.6px;color:#546e7a;">12</div>
<div class="ln" style="left:-1.7px;top:986.0px;">13</div><div class="code" style="left:247.9px;top:986.7px">      <span class="b2">}</span></div>
<div class="ln" style="left:-1.7px;top:1072.4px;">14</div><div class="code" style="left:247.9px;top:1073.1px">    <span class="b1">}</span><span class="p">,</span></div>
<div class="ln" style="left:-1.7px;top:1158.8px;">15</div><div class="code" style="left:247.9px;top:1159.5px">  <span class="b3">}</span><span class="b2">)</span><span class="p">;</span></div>
<div class="ln" style="left:-1.7px;top:1245.2px;">16</div><div class="code" style="left:247.9px;top:1245.9px">  <span class="k">return</span> <span class="b2">{</span> id<span class="p">:</span> newUser<span class="p">.</span>id<span class="p">,</span> email<span class="p">:</span> user<span class="p">.</span>email <span class="b2">}</span><span class="p">;</span></div>
<div class="ln" style="left:-1.7px;top:1331.6px;">17</div><div class="code" style="left:247.9px;top:1332.3px"><span class="b1">}</span><span class="p">;</span></div>
<div class="ln" style="left:-1.7px;top:1418.0px;">18</div>
<div class="abs" style="left:640.0px;top:550.9px;width:96.500px;height:64px;overflow:hidden;font-size:47px;line-height:64px;color:#a0b5d9;white-space:nowrap;letter-spacing:0.300px;-webkit-text-stroke:0.450px #a0b5d9">user:</div>
<div class="abs" style="left:443.0px;top:984.8px;width:1493px;height:272.500px;background:#fff;border:3.400px solid #ececec"></div>
<div class="abs" style="left:446.4px;top:988.0px;width:1486px;height:86.600px;background:#eef3f4"></div>
<svg class="abs" style="left:455.5px;top:1010.0px" width="49.400" height="43.700" viewBox="0 0 52 46"><g fill="none" stroke="#64cbc1" stroke-width="3.600" stroke-linejoin="round"><path d="M28 2.200 L48.500 11.500 a2 2 0 0 1 1 1.800 V29.500 a2 2 0 0 1 -1 1.800 L23.500 43.500 L3.500 33.500 a2 2 0 0 1 -1 -1.800 V15.500 a2 2 0 0 1 1 -1.800z"/><path d="M3 14.500 L23.500 24 L49 12.200 M23.500 24 V43"/></g></svg><div class="code" style="left:521.8px;top:990.3px;color:#64cbc1">firstName?</div>
<svg class="abs" style="left:455.5px;top:1096.4px" width="49.400" height="43.700" viewBox="0 0 52 46"><g fill="none" stroke="#0a7ad6" stroke-width="3.600" stroke-linejoin="round"><path d="M28 2.200 L48.500 11.500 a2 2 0 0 1 1 1.800 V29.500 a2 2 0 0 1 -1 1.800 L23.500 43.500 L3.500 33.500 a2 2 0 0 1 -1 -1.800 V15.500 a2 2 0 0 1 1 -1.800z"/><path d="M3 14.500 L23.500 24 L49 12.200 M23.500 24 V43"/></g></svg><div class="code" style="left:521.8px;top:1076.7px;color:#8a9fab">lastName?</div>
<svg class="abs" style="left:455.5px;top:1182.8px" width="49.400" height="43.700" viewBox="0 0 52 46"><g fill="none" stroke="#0a7ad6" stroke-width="3.600" stroke-linejoin="round"><path d="M28 2.200 L48.500 11.500 a2 2 0 0 1 1 1.800 V29.500 a2 2 0 0 1 -1 1.800 L23.500 43.500 L3.500 33.500 a2 2 0 0 1 -1 -1.800 V15.500 a2 2 0 0 1 1 -1.800z"/><path d="M3 14.500 L23.500 24 L49 12.200 M23.500 24 V43"/></g></svg><div class="code" style="left:521.8px;top:1163.1px;color:#8a9fab">set?</div>
<div class="code" style="left:1049.5px;top:990.1px;color:#8fd6cf;font-size:37.500px;letter-spacing:-1.870px;-webkit-text-stroke:1.300px currentColor">(property) firstName?: string | undefined</div>
</div>
</div>
</div>
</body></html>
